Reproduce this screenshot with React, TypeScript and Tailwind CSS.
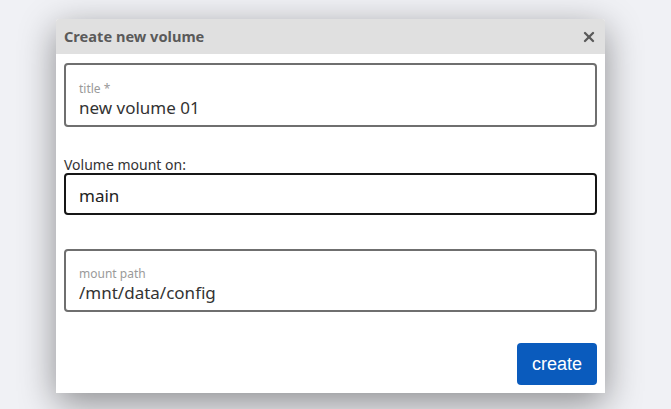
import { X } from 'lucide-react';

const font = { fontFamily: '"Noto Sans", "Open Sans", sans-serif' };

function FloatField({ label, value, h }: { label: string; value: string; h: string }) {
  return (
    <div className={`${h} flex flex-col justify-center rounded border-2 border-[#6f6f6f] px-[13px] pt-[9px]`}>
      <span className="text-[12px] leading-[16px] text-[#9a9a9a]">{label}</span>
      <span className="text-[17px] leading-[22px] text-[#333]">{value}</span>
    </div>
  );
}

export default function App() {
  return (
    <div className="min-h-[409px] bg-[#f0f1f5] pl-[56px] pt-[19px]" style={font}>
      <div className="w-[549px] overflow-hidden rounded-t-[3px] bg-white shadow-[0_10px_36px_rgba(0,0,0,0.42)]">
        <div className="flex h-[35px] items-center justify-between bg-[#e0e0e0] pl-2 pr-[8px]">
          <span className="text-[14.6px] font-bold text-[#5a5a5a]">Create new volume</span>
          <X size={16} strokeWidth={3.5} className="text-[#5a5a5a]" />
        </div>
        <div className="flex flex-col px-2 pt-[9px] pb-2">
          <FloatField h="h-[64px]" label="title *" value="new volume 01" />
          <label className="mt-[31px] mb-[1px] text-[14px] leading-[14px] text-[#333]">Volume mount on:</label>
          <div className="flex h-[42px] items-center rounded border-2 border-[#161616] px-[13px] pt-[3px] text-[17px] text-[#222]">
            main
          </div>
          <div className="mt-[34px]">
            <FloatField h="h-[63px]" label="mount path" value="/mnt/data/config" />
          </div>
          <div className="mt-[31px] flex justify-end">
            <button
              className="h-[42px] w-[80px] rounded bg-[#0a5bbd] text-[18px] text-white"
              style={{ fontFamily: '"Liberation Sans", Arial, sans-serif' }}
            >
              create
            </button>
          </div>
        </div>
      </div>
    </div>
  );
}
